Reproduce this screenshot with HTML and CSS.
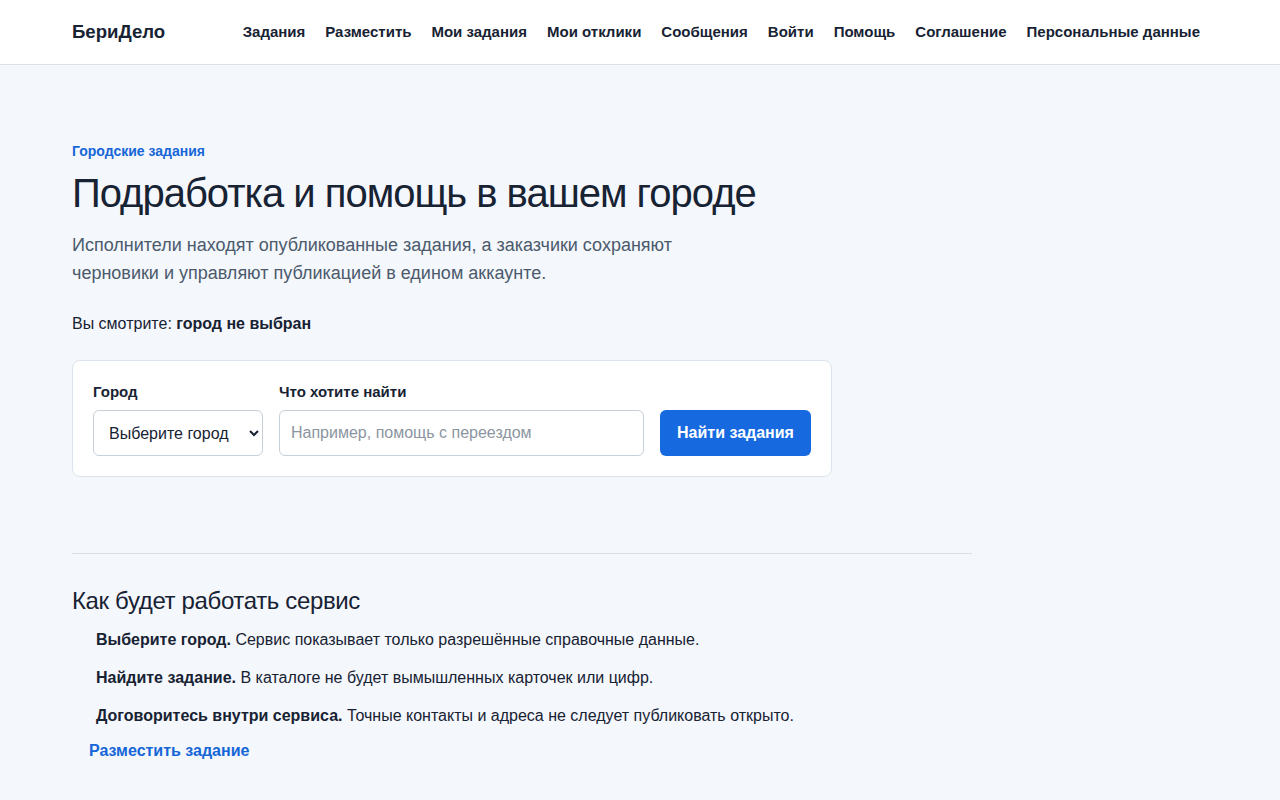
FILE: index.html
```html
<!DOCTYPE html>
<html lang="ru">
<head>
<meta charset="utf-8">
<title>БериДело</title>
<link rel="stylesheet" href="styles.css">
</head>
<body>
<header class="topbar">
  <div class="topbar-inner">
    <a class="brand" href="#">БериДело</a>
    <nav class="nav">
      <a href="#">Задания</a>
      <a href="#">Разместить</a>
      <a href="#">Мои задания</a>
      <a href="#">Мои отклики</a>
      <a href="#">Сообщения</a>
      <a href="#">Войти</a>
      <a href="#">Помощь</a>
      <a href="#">Соглашение</a>
      <a href="#">Персональные данные</a>
    </nav>
  </div>
</header>
<main class="main">
  <section class="hero">
    <div class="eyebrow">Городские задания</div>
    <h1 class="title">Подработка и помощь в вашем городе</h1>
    <p class="lead">Исполнители находят опубликованные задания, а заказчики сохраняют черновики и управляют публикацией в едином аккаунте.</p>
    <p class="current">Вы смотрите: <strong>город не выбран</strong></p>
    <form class="search">
      <label class="field field-city">
        <span class="label">Город</span>
        <select class="control select">
          <option>Выберите город</option>
        </select>
      </label>
      <label class="field field-query">
        <span class="label">Что хотите найти</span>
        <input class="control input" type="text" placeholder="Например, помощь с переездом">
      </label>
      <button class="btn" type="button">Найти задания</button>
    </form>
  </section>
  <hr class="divider">
  <section class="how">
    <h2 class="how-title">Как будет работать сервис</h2>
    <ol class="steps">
      <li><strong>Выберите город.</strong> Сервис показывает только разрешённые справочные данные.</li>
      <li><strong>Найдите задание.</strong> В каталоге не будет вымышленных карточек или цифр.</li>
      <li><strong>Договоритесь внутри сервиса.</strong> Точные контакты и адреса не следует публиковать открыто.</li>
    </ol>
    <p class="cta"><a href="#">Разместить задание</a></p>
  </section>
</main>
</body>
</html>
```
FILE: styles.css
```css
* { box-sizing: border-box; }
html, body { margin: 0; padding: 0; }
body {
  font-family: "Liberation Sans", Arial, sans-serif;
  background: #f4f7fb;
  color: #172233;
  font-size: 16px;
  line-height: 24px;
}
a { text-decoration: none; color: inherit; }

.topbar {
  background: #ffffff;
  border-bottom: 1px solid #dbe1e8;
  padding: 0 80px 0 72px;
}
.topbar-inner {
  height: 64px;
  display: flex;
  align-items: center;
  justify-content: space-between;
}
.brand {
  font-size: 18.6px;
  font-weight: 700;
  color: #172233;
}
.nav {
  display: flex;
  gap: 20px;
}
.nav a {
  font-size: 15px;
  font-weight: 700;
  color: #172233;
}

.main {
  padding: 76px 72px 40px;
}
.eyebrow {
  font-size: 14px;
  line-height: 20px;
  font-weight: 700;
  color: #1666d8;
}
.title {
  margin: 8px 0 0;
  font-size: 40px;
  line-height: 48px;
  font-weight: 400;
  color: #172233;
  letter-spacing: -1px;
}
.lead {
  margin: 14px 0 0;
  max-width: 640px;
  font-size: 18px;
  line-height: 28px;
  color: #4b5a6d;
}
.current {
  margin: 25px 0 0;
  font-size: 16px;
  line-height: 24px;
}
.search {
  margin-top: 24px;
  width: 760px;
  background: #ffffff;
  border: 1px solid #dde3ea;
  border-radius: 8px;
  padding: 20px;
  display: flex;
  align-items: flex-end;
  gap: 16px;
}
.field {
  display: flex;
  flex-direction: column;
  gap: 7px;
}
.field-city { width: 170px; }
.field-query { width: 365px; }
.label {
  font-size: 15px;
  line-height: 22px;
  font-weight: 700;
  color: #172233;
}
.control {
  height: 46px;
  border: 1px solid #c7cfd8;
  border-radius: 6px;
  background: #ffffff;
  font-family: "Liberation Sans", Arial, sans-serif;
  font-size: 16px;
  color: #172233;
}
.select {
  width: 170px;
  padding: 0 6px 0 11px;
}
.input {
  width: 365px;
  padding: 0 11px;
}
.input::placeholder { color: #8b95a1; }
.btn {
  height: 46px;
  padding: 0 17px;
  border: 0;
  border-radius: 6px;
  background: #1769e0;
  color: #ffffff;
  font-family: "Liberation Sans", Arial, sans-serif;
  font-size: 16px;
  font-weight: 700;
}

.divider {
  margin: 76px 0 0;
  width: 900px;
  border: 0;
  border-top: 1px solid #d9dfe6;
}
.how-title {
  margin: 32px 0 0;
  font-size: 24px;
  line-height: 30px;
  font-weight: 400;
  color: #172233;
  letter-spacing: -0.36px;
}
.steps {
  list-style: none;
  margin: 12px 0 0;
  padding: 0 0 0 24px;
}
.steps li {
  font-size: 16px;
  line-height: 24px;
  margin-bottom: 14px;
}
.steps li:last-child { margin-bottom: 0; }
.cta {
  margin: 11px 0 0;
  padding-left: 17px;
}
.cta a {
  font-weight: 700;
  color: #1666d8;
}
```
